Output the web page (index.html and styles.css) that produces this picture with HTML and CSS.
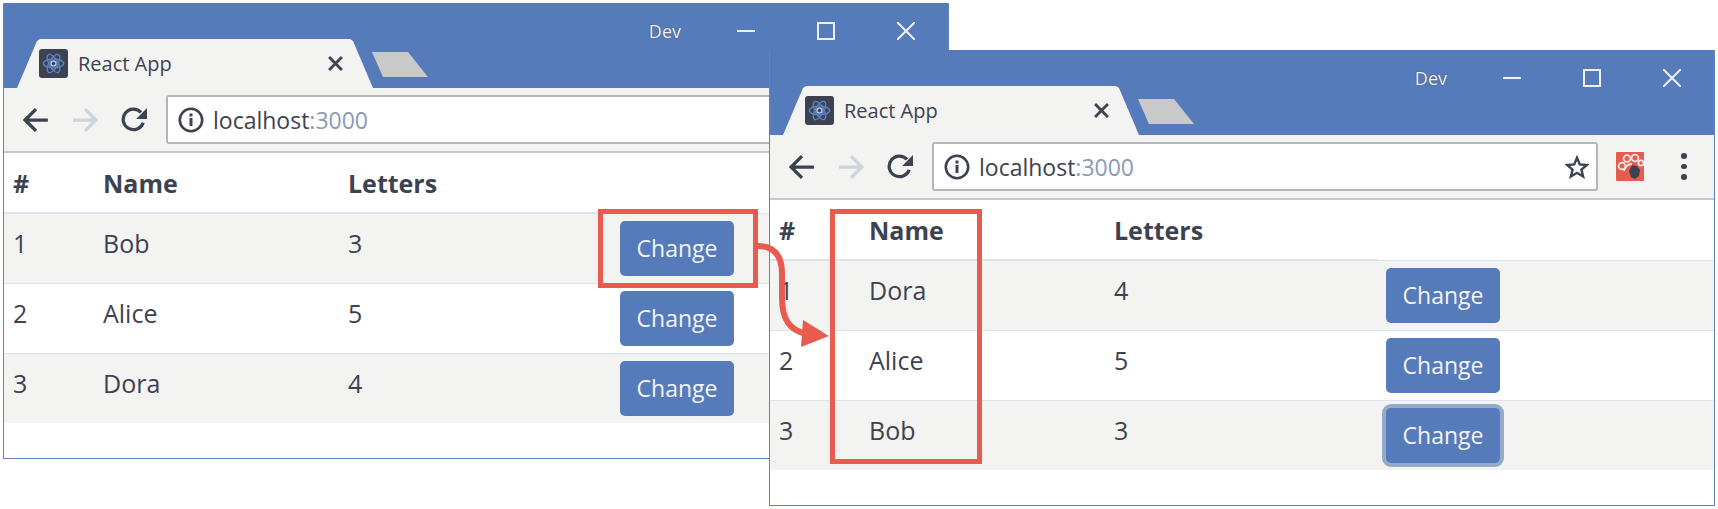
FILE: index.html
```html
<!DOCTYPE html>
<html lang="en">
<head>
  <meta charset="UTF-8">
  <title>React App</title>
  <link rel="stylesheet" href="styles.css">
</head>
<body>

<svg class="defs" width="0" height="0">
  <symbol id="i-atom" viewBox="0 0 30 30">
    <g fill="none" stroke="#5a83c8" stroke-width="1.4">
      <ellipse cx="15" cy="15" rx="10.500" ry="4.500"/>
      <ellipse cx="15" cy="15" rx="10.500" ry="4.500" transform="rotate(60 15 15)"/>
      <ellipse cx="15" cy="15" rx="10.500" ry="4.500" transform="rotate(120 15 15)"/>
    </g>
    <circle cx="15" cy="15" r="2.600" fill="none" stroke="#a9c3ee" stroke-width="1.600"/>
  </symbol>
  <symbol id="i-arrow" viewBox="0 0 24 24">
    <path d="M23 12H2M12 2L2 12l10 10" fill="none" stroke="currentColor" stroke-width="3"/>
  </symbol>
  <symbol id="i-reload" viewBox="0 0 24 24">
    <path d="M20.5 14.5A9.5 9.5 0 1 1 18.5 5" fill="none" stroke="currentColor" stroke-width="3"/>
    <path d="M24 1v10H14z" fill="currentColor"/>
  </symbol>
  <symbol id="i-info" viewBox="0 0 26 26">
    <circle cx="13" cy="13" r="11.2" fill="none" stroke="currentColor" stroke-width="2.6"/>
    <path d="M11.5 11h3v8h-3zM11.5 6.500h3v3h-3z" fill="currentColor"/>
  </symbol>
  <symbol id="i-star" viewBox="0 0 26 26">
    <path d="M13 3l3 7.200 7.600.6-5.800 5 1.800 7.500L13 19.300 6.400 23.300l1.800-7.500-5.800-5 7.600-.6z" fill="none" stroke="currentColor" stroke-width="2.600"/>
  </symbol>
  <symbol id="i-paw" viewBox="0 0 28 29">
    <rect width="28" height="29" rx="1" fill="#e85c50"/>
    <g fill="none" stroke="#f4e6e4" stroke-width="1.800">
      <circle cx="6" cy="14" r="3.400"/>
      <circle cx="11" cy="6.500" r="3.400"/>
      <circle cx="19" cy="6" r="3.400"/>
      <circle cx="25" cy="11" r="2.600"/>
      <path d="M8 19c1-4 3-7 8-7"/>
    </g>
    <path d="M13 19l3-6 5 1 3 4-1 6-4 3-4-2z" fill="#3d4250"/>
  </symbol>
</svg>

<div class="desktop">

  <div class="window window-back">
    <div class="titlebar">
      <div class="tab">
        <svg class="favicon"><use href="#i-atom"/></svg>
        <span class="tab-title">React App</span>
        <span class="tab-close">
          <svg viewBox="0 0 14 14"><path d="M1 1l12 12M13 1L1 13"/></svg>
        </span>
      </div>
      <div class="newtab"></div>
      <div class="caption">
        <span class="caption-name">Dev</span>
        <svg class="cap-btn" viewBox="0 0 18 18"><path d="M0 9h18"/></svg>
        <svg class="cap-btn" viewBox="0 0 18 18"><path d="M1 1h16v16H1z"/></svg>
        <svg class="cap-btn" viewBox="0 0 18 18"><path d="M0 0l18 18M18 0L0 18"/></svg>
      </div>
    </div>
    <div class="toolbar">
      <svg class="tool"><use href="#i-arrow"/></svg>
      <svg class="tool tool-off flip"><use href="#i-arrow"/></svg>
      <svg class="tool"><use href="#i-reload"/></svg>
      <div class="omnibox">
        <svg class="info"><use href="#i-info"/></svg>
        <span class="url">localhost<span class="port">:3000</span></span>
        <svg class="star"><use href="#i-star"/></svg>
      </div>
      <svg class="ext"><use href="#i-paw"/></svg>
      <div class="dots"><i></i><i></i><i></i></div>
    </div>
    <table class="people">
      <colgroup><col class="c-id"><col class="c-name"><col class="c-letters"><col></colgroup>
      <thead>
        <tr><th>#</th><th>Name</th><th>Letters</th></tr>
      </thead>
      <tbody>
        <tr><td>1</td><td>Bob</td><td>3</td><td><button>Change</button></td></tr>
        <tr><td>2</td><td>Alice</td><td>5</td><td><button>Change</button></td></tr>
        <tr><td>3</td><td>Dora</td><td>4</td><td><button>Change</button></td></tr>
      </tbody>
    </table>
  </div>

  <div class="window window-front">
    <div class="titlebar">
      <div class="tab">
        <svg class="favicon"><use href="#i-atom"/></svg>
        <span class="tab-title">React App</span>
        <span class="tab-close">
          <svg viewBox="0 0 14 14"><path d="M1 1l12 12M13 1L1 13"/></svg>
        </span>
      </div>
      <div class="newtab"></div>
      <div class="caption">
        <span class="caption-name">Dev</span>
        <svg class="cap-btn" viewBox="0 0 18 18"><path d="M0 9h18"/></svg>
        <svg class="cap-btn" viewBox="0 0 18 18"><path d="M1 1h16v16H1z"/></svg>
        <svg class="cap-btn" viewBox="0 0 18 18"><path d="M0 0l18 18M18 0L0 18"/></svg>
      </div>
    </div>
    <div class="toolbar">
      <svg class="tool"><use href="#i-arrow"/></svg>
      <svg class="tool tool-off flip"><use href="#i-arrow"/></svg>
      <svg class="tool"><use href="#i-reload"/></svg>
      <div class="omnibox">
        <svg class="info"><use href="#i-info"/></svg>
        <span class="url">localhost<span class="port">:3000</span></span>
        <svg class="star"><use href="#i-star"/></svg>
      </div>
      <svg class="ext"><use href="#i-paw"/></svg>
      <div class="dots"><i></i><i></i><i></i></div>
    </div>
    <table class="people">
      <colgroup><col class="c-id"><col class="c-name"><col class="c-letters"><col></colgroup>
      <thead>
        <tr><th>#</th><th>Name</th><th>Letters</th></tr>
      </thead>
      <tbody>
        <tr><td>1</td><td>Dora</td><td>4</td><td><button>Change</button></td></tr>
        <tr><td>2</td><td>Alice</td><td>5</td><td><button>Change</button></td></tr>
        <tr><td>3</td><td>Bob</td><td>3</td><td><button class="focused">Change</button></td></tr>
      </tbody>
    </table>
  </div>

  <!-- callout boxes and the arrow between them -->
  <svg class="callouts" viewBox="0 0 1718 509">
    <rect x="600.500" y="211.500" width="155" height="74"/>
    <rect x="832.500" y="211.500" width="147" height="250"/>
    <path class="line" d="M758 246c18 0 24 12 24 28v24c0 22 8 32 24 36"/>
    <path class="head" d="M829 336l-26-16-2 27z"/>
  </svg>

</div>

</body>
</html>
```

FILE: styles.css
```css
body {
  margin: 0;
  background: #fff;
  font-family: "Open Sans", "Noto Sans", sans-serif;
  color: #3d4250;
}

.defs {
  position: absolute;
}

.desktop {
  position: relative;
  width: 1718px;
  height: 509px;
  overflow: hidden;
}

/* browser windows */
.window {
  position: absolute;
  width: 946px;
  height: 456px;
  box-sizing: border-box;
  background: #fff;
  border: 1px solid #5f82c0;
  border-top: 0;
}
.window-back {
  left: 3px;
  top: 3px;
}
.window-front {
  left: 769px;
  top: 50px;
}

.titlebar {
  display: flex;
  align-items: flex-end;
  height: 85px;
  background: #567bba;
}

.tab {
  display: flex;
  align-items: center;
  box-sizing: border-box;
  width: 356px;
  height: 49px;
  margin-left: 13px;
  padding: 0 0 0 22px;
  background: #f3f3f2;
  clip-path: polygon(0 100%, 20px 2px, 23px 0, 333px 0, 336px 2px, 356px 100%);
}
.favicon {
  width: 29px;
  height: 29px;
  border-radius: 3px;
  background: #3d4250;
}
.tab-title {
  margin-left: 10px;
  font-size: 20px;
}
.tab-close {
  display: flex;
  margin-left: 156px;
}
.tab-close svg {
  width: 15px;
  height: 15px;
  fill: none;
  stroke: #3d4250;
  stroke-width: 2.6;
}

.newtab {
  width: 56px;
  height: 25px;
  margin: 0 0 11px -1px;
  background: #c9c9c9;
  clip-path: polygon(0 0, 36px 0, 56px 100%, 11px 100%);
}

.caption {
  display: flex;
  align-items: center;
  gap: 62px;
  align-self: flex-start;
  margin-left: auto;
  margin-top: 18px;
  margin-right: 33px;
  color: #f2f2f2;
}
.caption-name {
  margin-right: -6px;
  font-size: 18px;
  line-height: 20px;
  text-shadow: 0 0 1px #2b3040;
}
.cap-btn {
  width: 18px;
  height: 18px;
  fill: none;
  stroke: #eef1f7;
  stroke-width: 2;
}

.toolbar {
  display: flex;
  align-items: center;
  box-sizing: border-box;
  height: 65px;
  padding: 0 0 0 19px;
  background: #f3f3f2;
  border-bottom: 2px solid #c6c7cb;
}
.tool {
  width: 26px;
  height: 26px;
  margin-right: 23px;
  color: #3d4250;
}
.tool-off {
  color: #ced3dc;
}
.flip {
  transform: scaleX(-1);
}

.omnibox {
  display: flex;
  align-items: center;
  box-sizing: border-box;
  width: 666px;
  height: 49px;
  margin-left: -4px;
  padding: 0 7px 0 10px;
  background: #fff;
  border: 2px solid #b5b6ba;
  border-radius: 3px;
}
.info {
  width: 26px;
  height: 26px;
  color: #3d4250;
}
.url {
  margin-left: 9px;
  font-size: 23px;
  color: #3d4250;
}
.port {
  color: #8b9ab5;
}
.star {
  width: 24px;
  height: 24px;
  margin-left: auto;
  color: #3d4250;
}
.ext {
  width: 28px;
  height: 29px;
  margin-left: 18px;
}
.dots {
  display: flex;
  flex-direction: column;
  gap: 5px;
  margin-left: 37px;
}
.dots i {
  width: 5.500px;
  height: 5.500px;
  border-radius: 50%;
  background: #3d4250;
}

/* the table */
.people {
  width: 100%;
  table-layout: fixed;
  border-collapse: collapse;
  font-size: 25px;
  color: #3d4250;
}
.c-id {
  width: 92px;
}
.c-name {
  width: 245px;
}
.c-letters {
  width: 271px;
}
.people th {
  box-sizing: border-box;
  height: 60px;
  padding: 0 7px;
  text-align: left;
  font-weight: 700;
  border-bottom: 2px solid #dce3ee;
}
.people td {
  box-sizing: border-box;
  height: 70px;
  padding: 0 7px 10px;
  border-top: 1px solid #dce3ee;
}
.people th:first-child,
.people td:first-child {
  padding-left: 9px;
}
.people td:last-child {
  padding: 7px 8px 6px;
  vertical-align: top;
}
.people tbody tr:nth-child(odd) {
  background: #f3f3f2;
}

button {
  display: block;
  width: 114px;
  height: 55px;
  padding: 0;
  background: #567bba;
  border: 0;
  border-radius: 5px;
  color: #f2f4f8;
  font-family: inherit;
  font-size: 23px;
}
.focused {
  box-shadow: 0 0 0 4px #95a9c8;
}

/* callouts */
.callouts {
  position: absolute;
  left: 0;
  top: 0;
  width: 1718px;
  height: 509px;
  fill: none;
  stroke: #e85c50;
  stroke-width: 5;
}
.callouts .line {
  stroke-width: 6;
}
.callouts .head {
  fill: #e85c50;
  stroke: none;
}
```
